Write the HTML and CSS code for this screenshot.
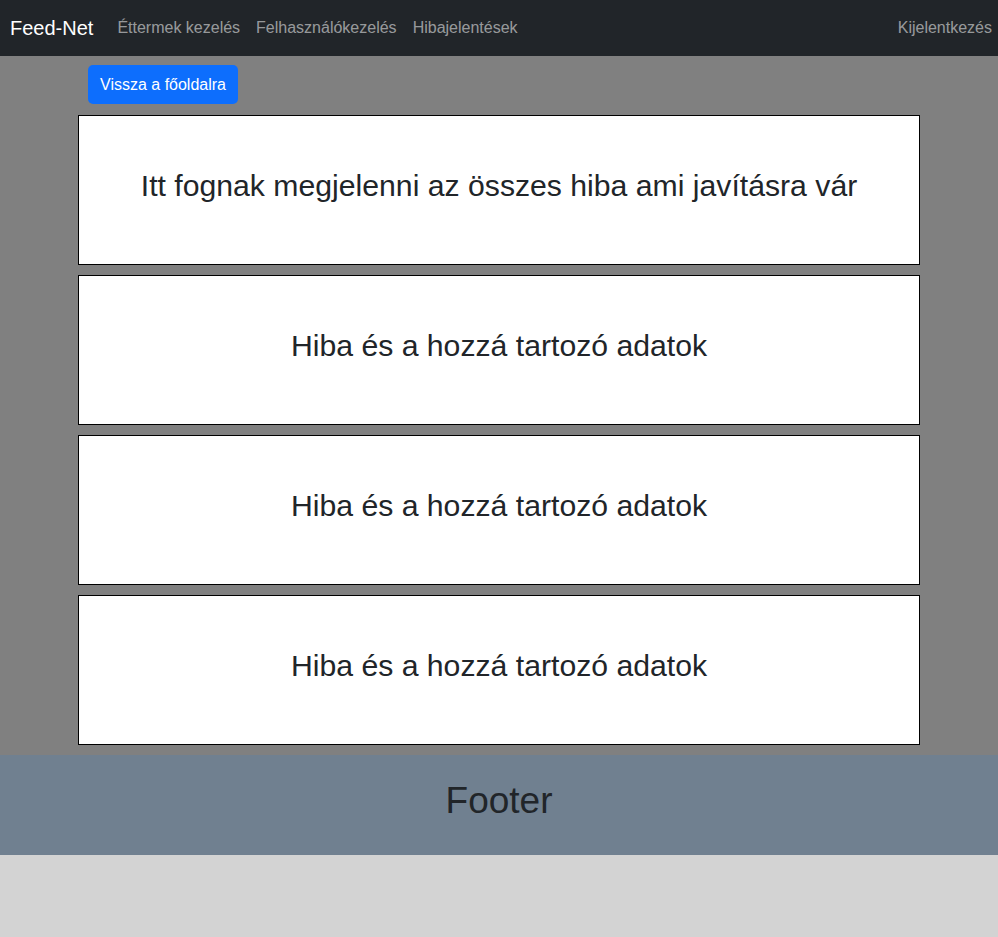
FILE: index.html
```html
<!DOCTYPE html>
<html lang="hu">
<head>
<meta charset="utf-8">
<title>Feed-Net</title>
<link rel="stylesheet" href="styles.css">
</head>
<body>
<nav class="navbar">
  <a class="brand" href="#">Feed-Net</a>
  <ul class="nav-links">
    <li><a href="#">Éttermek kezelés</a></li>
    <li><a href="#">Felhasználókezelés</a></li>
    <li><a href="#">Hibajelentések</a></li>
  </ul>
  <a class="logout" href="#">Kijelentkezés</a>
</nav>
<main class="main">
  <div class="content">
    <div class="toolbar">
      <button class="btn-primary">Vissza a főoldalra</button>
    </div>
    <div class="card"><h2>Itt fognak megjelenni az összes hiba ami javításra vár</h2></div>
    <div class="card"><h2>Hiba és a hozzá tartozó adatok</h2></div>
    <div class="card"><h2>Hiba és a hozzá tartozó adatok</h2></div>
    <div class="card"><h2>Hiba és a hozzá tartozó adatok</h2></div>
  </div>
</main>
<footer class="footer"><h1>Footer</h1></footer>
</body>
</html>
```
FILE: styles.css
```css
* { box-sizing: border-box; }
html, body {
  margin: 0;
  padding: 0;
  background: #d3d3d3;
  font-family: "Liberation Sans", Arial, sans-serif;
  color: #212529;
}
.navbar {
  display: flex;
  align-items: center;
  height: 56px;
  background: #212529;
  padding: 0 6px 0 10px;
}
.brand {
  color: #fff;
  font-size: 20px;
  text-decoration: none;
  margin-right: 16px;
}
.nav-links {
  display: flex;
  list-style: none;
  margin: 0;
  padding: 0;
  flex: 1;
}
.nav-links a, .logout {
  display: block;
  color: rgba(255, 255, 255, 0.55);
  font-size: 16px;
  text-decoration: none;
  padding: 8px;
}
.logout { padding-right: 0; }
.main {
  background: #808080;
  padding: 9px 0 10px;
}
.content {
  width: 842px;
  margin: 0 auto;
  display: flex;
  flex-direction: column;
  gap: 10px;
}
.toolbar {
  padding-left: 10px;
  margin-bottom: 1px;
}
.btn-primary {
  background: #0d6efd;
  color: #fff;
  border: 0;
  border-radius: 5px;
  font-family: inherit;
  font-size: 16px;
  line-height: 24px;
  padding: 7px 12px;
  height: 39px;
}
.card {
  height: 150px;
  background: #fff;
  border: 1px solid #000;
  display: flex;
  align-items: center;
  justify-content: center;
}
.card h2 {
  margin: 0 0 8px;
  font-size: 30.2px;
  font-weight: 400;
  line-height: 1.2;
  text-align: center;
}
.footer {
  height: 100px;
  background: #708090;
  display: flex;
  align-items: center;
  justify-content: center;
}
.footer h1 {
  margin: 0 0 8px;
  font-size: 37px;
  font-weight: 400;
  line-height: 1.2;
}
```
